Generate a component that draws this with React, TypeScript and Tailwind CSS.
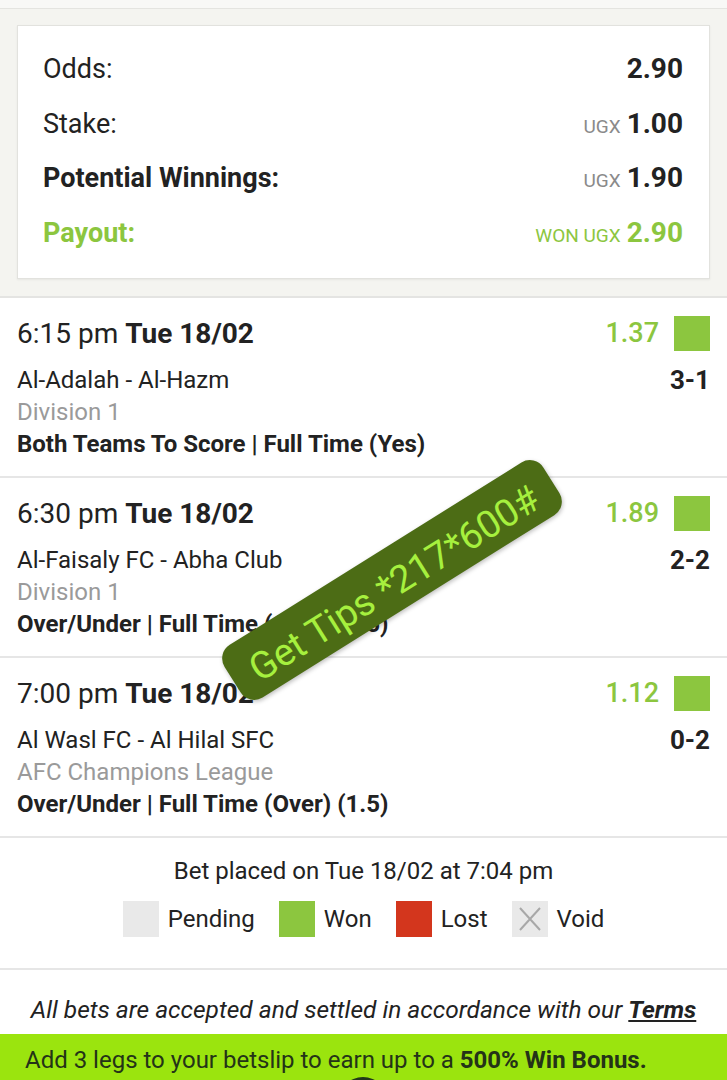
const matches = [
  {
    time: '6:15 pm',
    date: 'Tue 18/02',
    teams: 'Al-Adalah - Al-Hazm',
    league: 'Division 1',
    market: 'Both Teams To Score | Full Time (Yes)',
    odds: '1.37',
    score: '3-1',
  },
  {
    time: '6:30 pm',
    date: 'Tue 18/02',
    teams: 'Al-Faisaly FC - Abha Club',
    league: 'Division 1',
    market: 'Over/Under | Full Time (Over) (2.5)',
    odds: '1.89',
    score: '2-2',
  },
  {
    time: '7:00 pm',
    date: 'Tue 18/02',
    teams: 'Al Wasl FC - Al Hilal SFC',
    league: 'AFC Champions League',
    market: 'Over/Under | Full Time (Over) (1.5)',
    odds: '1.12',
    score: '0-2',
  },
];

function SummaryRow({ label, value, prefix, tone }: { label: string; value: string; prefix?: string; tone?: 'bold' | 'green' }) {
  const labelCls =
    tone === 'green' ? 'font-bold text-[#8cc63f]' : tone === 'bold' ? 'font-bold text-[#222]' : 'text-[#222]';
  return (
    <div className="flex h-[54.5px] items-center justify-between">
      <span className={`text-[27px] ${labelCls}`}>{label}</span>
      <span className="flex items-baseline gap-[6px]">
        {prefix && (
          <span className={`text-[19px] ${tone === 'green' ? 'text-[#8cc63f]' : 'text-[#8a8a8a]'}`}>{prefix}</span>
        )}
        <span className={`text-[28px] font-bold ${tone === 'green' ? 'text-[#8cc63f]' : 'text-[#222]'}`}>{value}</span>
      </span>
    </div>
  );
}

function MatchRow({ m }: { m: (typeof matches)[number] }) {
  return (
    <div className="h-[180px] border-b-2 border-[#e6e6e6] px-[17px] pt-[18px]">
      <div className="flex h-[35px] items-center justify-between">
        <span className="text-[28px] text-[#222]">
          {m.time} <span className="font-bold">{m.date}</span>
        </span>
        <span className="flex items-center gap-[15px]">
          <span className="text-[27px] font-medium text-[#8cc63f]">{m.odds}</span>
          <span className="h-[35px] w-[36px] bg-[#8cc63f]" />
        </span>
      </div>
      <div className="mt-[13px] flex h-[32px] items-center justify-between text-[24px] text-[#222]">
        <span>{m.teams}</span>
        <span className="text-[26px] font-bold">{m.score}</span>
      </div>
      <div className="flex h-[32px] items-center text-[24px] text-[#9a9a9a]">{m.league}</div>
      <div className="flex h-[32px] items-center text-[24px] font-bold text-[#222]">{m.market}</div>
    </div>
  );
}

function Legend({ label, cls, voidMark }: { label: string; cls: string; voidMark?: boolean }) {
  return (
    <span className="flex items-center gap-[9px]">
      <span className={`flex h-[36px] w-[36px] items-center justify-center ${cls}`}>
        {voidMark && (
          <svg width="26" height="28" viewBox="0 0 26 28">
            <path d="M3 3 L23 25 M23 3 L3 25" stroke="#a8a8a8" strokeWidth="2" />
          </svg>
        )}
      </span>
      <span className="text-[24px] text-[#222]">{label}</span>
    </span>
  );
}

export default function App() {
  return (
    <div className="relative h-[1080px] w-[727px] overflow-hidden bg-white font-['Roboto',sans-serif]">
      <div className="h-[9px] border-b border-[#e4e4e0] bg-[#f8f8f6]" />

      {/* bet summary */}
      <div className="border-b-2 border-[#e4e4e2] bg-[#f4f4f0] px-[17px] pb-[17px] pt-[16px]">
        <div className="border border-[#e2e2de] bg-white pl-[25px] pr-[26px] pb-[18px] pt-[16px] shadow-[0_1px_2px_rgba(0,0,0,0.06)]">
          <SummaryRow label="Odds:" value="2.90" />
          <SummaryRow label="Stake:" prefix="UGX" value="1.00" />
          <SummaryRow label="Potential Winnings:" prefix="UGX" value="1.90" tone="bold" />
          <SummaryRow label="Payout:" prefix="WON UGX" value="2.90" tone="green" />
        </div>
      </div>

      {matches.map((m) => (
        <MatchRow key={m.teams} m={m} />
      ))}

      {/* footer */}
      <div className="flex h-[132px] flex-col items-center border-b-2 border-[#e6e6e6] pt-[15px]">
        <div className="text-[24px] text-[#222]">Bet placed on Tue 18/02 at 7:04 pm</div>
        <div className="mt-[12px] flex items-center gap-[24px]">
          <Legend label="Pending" cls="bg-[#e9e9e9]" />
          <Legend label="Won" cls="bg-[#8cc63f]" />
          <Legend label="Lost" cls="bg-[#d3361d]" />
          <Legend label="Void" cls="bg-[#e9e9e9]" voidMark />
        </div>
      </div>

      <div className="flex h-[64px] items-end justify-center pb-[5px] text-[24.5px] italic text-[#222]">
        <span>
          All bets are accepted and settled in accordance with our{' '}
          <span className="font-bold underline">Terms</span>
        </span>
      </div>

      <div className="relative h-[47px] bg-[#9be40e] px-[25px] pt-[8px] text-[24px] text-[#243318]">
        Add 3 legs to your betslip to earn up to a <span className="font-bold">500% Win Bonus.</span>
        <div className="absolute left-[338px] top-[43px] h-[50px] w-[50px] rounded-full bg-[#21371a]" />
      </div>

      {/* promo stamp */}
      <div className="absolute left-[204px] top-[549px] flex h-[62px] w-[376px] rotate-[-32deg] items-center justify-center rounded-[16px] bg-[#4c6c15] pt-[8px] text-[38px] leading-none text-[#a6f03e] shadow-[0_2px_4px_rgba(0,0,0,0.25)]">
        Get Tips *217*600#
      </div>
    </div>
  );
}
